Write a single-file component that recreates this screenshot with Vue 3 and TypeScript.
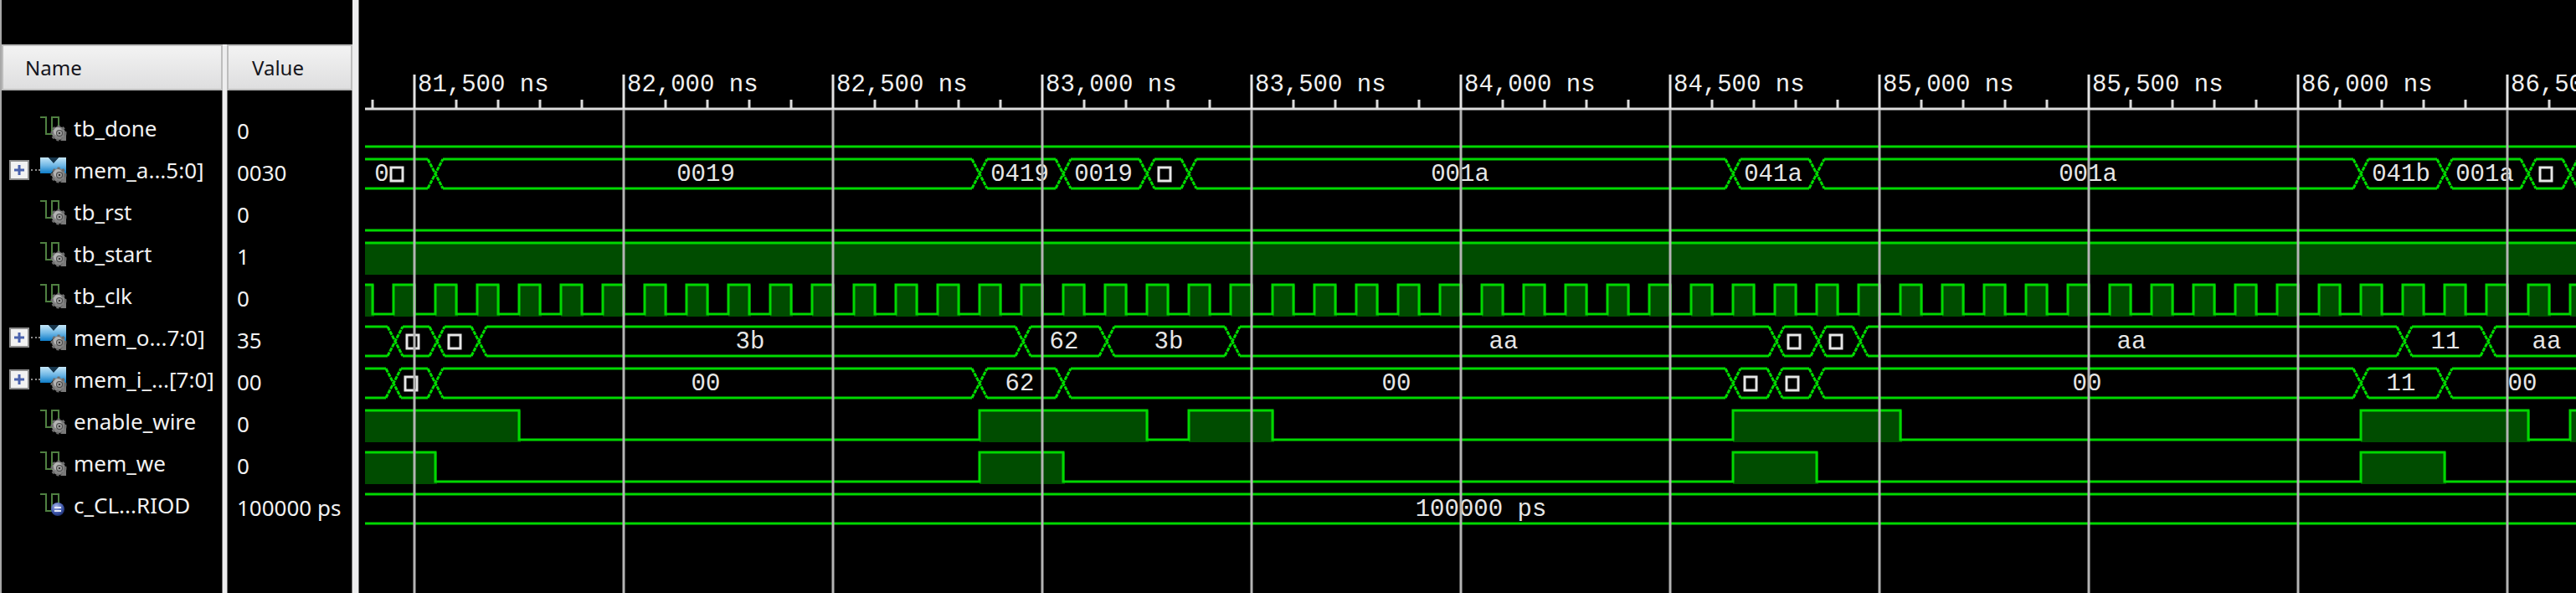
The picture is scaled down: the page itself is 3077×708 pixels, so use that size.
<script setup lang="ts">
import { computed, onBeforeUnmount, onMounted, ref } from 'vue'

type Kind = 'wire' | 'bus' | 'constant'

interface Signal {
  name: string
  value: string
  kind: Kind
}

interface Label {
  at: number
  text: string
}

interface BusLane {
  row: number
  edges: number[]
  labels: Label[]
  boxes: number[]
}

interface LogicLane {
  row: number
  pulses: [number, number][]
}

const signals: Signal[] = [
  { name: 'tb_done', value: '0', kind: 'wire' },
  { name: 'mem_a...5:0]', value: '0030', kind: 'bus' },
  { name: 'tb_rst', value: '0', kind: 'wire' },
  { name: 'tb_start', value: '1', kind: 'wire' },
  { name: 'tb_clk', value: '0', kind: 'wire' },
  { name: 'mem_o...7:0]', value: '35', kind: 'bus' },
  { name: 'mem_i_...[7:0]', value: '00', kind: 'bus' },
  { name: 'enable_wire', value: '0', kind: 'wire' },
  { name: 'mem_we', value: '0', kind: 'wire' },
  { name: 'c_CL...RIOD', value: '100000 ps', kind: 'constant' },
]

// Times are in nanoseconds; the trace is drawn at 2 ns per pixel.
const START = 81382
const BEFORE = 81000
const toX = (t: number): number => (t - START) / 2

const high = (row: number): number => 140 + row * 50
const low = (row: number): number => 175 + row * 50

const canvas = ref<SVGSVGElement | null>(null)
const width = ref(2641)
let observer: ResizeObserver | undefined

onMounted(() => {
  observer = new ResizeObserver(() => {
    if (canvas.value) width.value = canvas.value.getBoundingClientRect().width
  })
  if (canvas.value) observer.observe(canvas.value)
})
onBeforeUnmount(() => observer?.disconnect())

const end = computed(() => START + width.value * 2 + 200)

const ticks = computed(() => {
  const list: { x: number; major: boolean; label: string }[] = []
  for (let t = 81400; t < end.value; t += 100) {
    list.push({ x: toX(t), major: t % 500 === 0, label: `${t.toLocaleString('en-US')} ns` })
  }
  return list
})
const majors = computed(() => ticks.value.filter((t) => t.major))

const clock = computed<LogicLane>(() => {
  const pulses: [number, number][] = []
  for (let t = 81350; t < end.value; t += 100) pulses.push([t, t + 50])
  return { row: 4, pulses }
})

const logic = computed<LogicLane[]>(() => [
  { row: 0, pulses: [] },
  { row: 2, pulses: [] },
  { row: 3, pulses: [[BEFORE, end.value]] },
  clock.value,
  {
    row: 7,
    pulses: [
      [BEFORE, 81750],
      [82850, 83250],
      [83350, 83550],
      [84650, 85050],
      [86150, 86550],
      [86650, 87050],
    ],
  },
  {
    row: 8,
    pulses: [
      [BEFORE, 81550],
      [82850, 83050],
      [84650, 84850],
      [86150, 86350],
    ],
  },
])

const buses: BusLane[] = [
  {
    row: 1,
    edges: [81550, 82850, 83050, 83250, 83350, 84650, 84850, 86150, 86350, 86550, 86650],
    labels: [
      { at: 81422, text: '0' },
      { at: 82196, text: '0019' },
      { at: 82946, text: '0419' },
      { at: 83146, text: '0019' },
      { at: 83998, text: '001a' },
      { at: 84746, text: '041a' },
      { at: 85498, text: '001a' },
      { at: 86246, text: '041b' },
      { at: 86446, text: '001a' },
    ],
    boxes: [81458, 83292, 86592],
  },
  {
    row: 5,
    edges: [81454, 81554, 81654, 82954, 83154, 83454, 84754, 84854, 84954, 86254, 86454],
    labels: [
      { at: 82302, text: '3b' },
      { at: 83052, text: '62' },
      { at: 83302, text: '3b' },
      { at: 84102, text: 'aa' },
      { at: 85602, text: 'aa' },
      { at: 86352, text: '11' },
      { at: 86594, text: 'aa' },
    ],
    boxes: [81496, 81596, 84796, 84896],
  },
  {
    row: 6,
    edges: [81450, 81550, 82850, 83050, 84650, 84750, 84850, 86150, 86350],
    labels: [
      { at: 82196, text: '00' },
      { at: 82946, text: '62' },
      { at: 83846, text: '00' },
      { at: 85496, text: '00' },
      { at: 86246, text: '11' },
      { at: 86536, text: '00' },
    ],
    boxes: [81492, 84692, 84792],
  },
  { row: 9, edges: [], labels: [{ at: 84048, text: '100000 ps' }], boxes: [] },
]

function logicPath(lane: LogicLane): string {
  const h = high(lane.row)
  const l = low(lane.row)
  let d = `M${toX(BEFORE)} ${l}`
  for (const [from, to] of lane.pulses) d += `H${toX(from)}V${h}H${toX(to)}V${l}`
  return `${d}H${toX(end.value)}`
}

function railPath(lane: BusLane): string {
  const stops = [BEFORE, ...lane.edges, end.value]
  let d = ''
  for (let i = 0; i < stops.length - 1; i++) {
    const from = toX(stops[i]) + 9
    const to = toX(stops[i + 1]) - 9
    if (to > from) d += `M${from} ${high(lane.row)}H${to}M${from} ${low(lane.row)}H${to}`
  }
  return d
}

function crossPath(lane: BusLane): string {
  const h = high(lane.row)
  const l = low(lane.row)
  return lane.edges
    .map((t) => {
      const x = toX(t)
      return `M${x - 9} ${h}L${x + 9} ${l}M${x - 9} ${l}L${x + 9} ${h}`
    })
    .join('')
}
</script>

<template>
  <main class="viewer">
    <section class="signals">
      <table>
        <thead>
          <tr>
            <th class="name-col"><span>Name</span></th>
            <th class="value-col"><span>Value</span></th>
          </tr>
        </thead>
        <tbody>
          <tr class="spacer"><td class="name-col"></td><td class="value-col"></td></tr>
          <tr v-for="signal in signals" :key="signal.name" class="signal">
            <td class="name-col">
              <div class="name">
                <span class="branch">
                  <button v-if="signal.kind === 'bus'" type="button" :aria-label="`Expand ${signal.name}`">
                    <svg width="24" height="24" viewBox="0 0 24 24">
                      <rect x="1" y="1" width="22" height="22" fill="#f2f2f2" stroke="#8e8e8e" stroke-width="2" />
                      <path d="M6 12H18M12 6V18" stroke="#4a62ad" stroke-width="3" />
                    </svg>
                  </button>
                  <i v-if="signal.kind === 'bus'" class="dots"></i>
                </span>
                <svg class="icon" width="32" height="32" viewBox="0 0 32 32">
                  <defs>
                    <linearGradient id="busBlue" x1="0" y1="0" x2="0" y2="1">
                      <stop offset="0" stop-color="#c4e6f8" />
                      <stop offset="0.5" stop-color="#72b9e6" />
                      <stop offset="1" stop-color="#0d7cc8" />
                    </linearGradient>
                    <radialGradient id="ball" cx="0.4" cy="0.3" r="0.8">
                      <stop offset="0" stop-color="#a9b8ea" />
                      <stop offset="0.6" stop-color="#3c54a8" />
                      <stop offset="1" stop-color="#14235c" />
                    </radialGradient>
                  </defs>
                  <template v-if="signal.kind === 'bus'">
                    <path d="M0 1H10L16 7L22 1H31V20H20L16 16L13 20H0Z" fill="url(#busBlue)" />
                    <path d="M10 1L16 8L22 1Z" fill="#17364c" />
                  </template>
                  <path v-else d="M0 3H7V23H14V3H22V16" fill="none" stroke="#4f8041" stroke-width="2" />
                  <g v-if="signal.kind === 'constant'">
                    <circle cx="21" cy="21" r="8" fill="url(#ball)" />
                    <path d="M17 19H25M17 23H25" stroke="#e6ebfa" stroke-width="2" />
                  </g>
                  <g v-else>
                    <circle cx="22" cy="22" r="8" fill="#858585" />
                    <circle cx="22" cy="22" r="8" fill="none" stroke="#6e6e6e" stroke-width="3" stroke-dasharray="3 3" />
                    <path d="M24 31H31V23Z" fill="#7a7a7a" />
                    <circle cx="21" cy="20" r="5" fill="#b4b4b4" />
                    <circle cx="23" cy="22" r="4" fill="#4a4a4a" />
                    <circle cx="23" cy="22" r="3" fill="#9a9a9a" />
                    <circle cx="23" cy="22" r="1" fill="#111" />
                  </g>
                </svg>
                <span class="text">{{ signal.name }}</span>
              </div>
            </td>
            <td class="value-col"><div class="value">{{ signal.value }}</div></td>
          </tr>
          <tr class="rest"><td class="name-col"></td><td class="value-col"></td></tr>
        </tbody>
      </table>
    </section>

    <div class="splitter"></div>

    <section class="waves">
      <svg ref="canvas" class="canvas">
        <g class="ruler">
          <line x1="0" y1="130" x2="100%" y2="130" />
          <template v-for="tick in ticks" :key="tick.x">
            <line v-if="!tick.major" :x1="tick.x" y1="119" :x2="tick.x" y2="130" />
            <text v-else :x="tick.x + 4" y="109">{{ tick.label }}</text>
          </template>
        </g>

        <g v-for="lane in logic" :key="lane.row">
          <rect
            v-for="pulse in lane.pulses"
            :key="pulse[0]"
            class="fill"
            :x="toX(pulse[0])"
            :y="high(lane.row)"
            :width="toX(pulse[1]) - toX(pulse[0]) + 2"
            height="38"
          />
          <path class="trace" :d="logicPath(lane)" />
        </g>

        <g v-for="bus in buses" :key="bus.row">
          <path class="trace" :d="railPath(bus)" />
          <path class="cross" :d="crossPath(bus)" />
          <text
            v-for="label in bus.labels"
            :key="label.at"
            class="bus-value"
            :x="toX(label.at)"
            :y="high(bus.row) + 26"
          >{{ label.text }}</text>
          <rect
            v-for="box in bus.boxes"
            :key="box"
            class="box"
            :x="toX(box) - 7"
            :y="high(bus.row) + 10"
            width="14"
            height="16"
          />
        </g>

        <g v-for="tick in majors" :key="tick.x">
          <line class="grid" :x1="tick.x" y1="130" :x2="tick.x" y2="100%" />
          <line class="mark" :x1="tick.x" y1="89" :x2="tick.x" y2="131" />
        </g>
      </svg>
    </section>
  </main>
</template>

<style>
body {
  margin: 0;
  background: #000;
}
</style>

<style scoped>
.viewer {
  display: flex;
  min-height: 100vh;
  background: #000;
  color: #f2f2f2;
  font-family: "Noto Sans", "Open Sans", sans-serif;
  font-size: 26px;
}

.signals {
  display: flex;
  flex: none;
  box-sizing: border-box;
  width: 421px;
  padding-top: 53px;
  border-left: 2px solid #a8a8a8;
}

table {
  width: 100%;
  table-layout: fixed;
  border-collapse: separate;
  border-spacing: 0;
}

th,
td {
  padding: 0;
  font-weight: 400;
  text-align: left;
}

.name-col {
  box-sizing: border-box;
  width: 269px;
  border-right: 5px solid #ededee;
}

th {
  height: 55px;
  color: #15151c;
  font-size: 24px;
  background: #f4f4f4;
}

th span {
  display: block;
  box-sizing: border-box;
  height: 55px;
  padding-left: 26px;
  border: 2px solid #bdbdbd;
  background: linear-gradient(#f3f3f3, #dededf);
  line-height: 51px;
}

th.value-col span {
  padding-left: 28px;
}

td.name-col {
  box-shadow: inset -1px 0 #777;
}

td.value-col {
  box-shadow: inset 1px 0 #777, inset -1px 0 #777;
}

.spacer td {
  height: 20px;
}

.signal td {
  height: 50px;
}

.name {
  display: flex;
  align-items: center;
  height: 50px;
  padding-left: 9px;
  white-space: nowrap;
}

.branch {
  display: flex;
  align-items: center;
  width: 37px;
  gap: 2px;
}

button {
  display: block;
  width: 24px;
  height: 24px;
  padding: 0;
  border: 0;
  background: none;
}

button svg,
.icon {
  display: block;
}

.dots {
  flex: 1;
  border-top: 2px dotted #8c8c8c;
}

.icon {
  flex: none;
  margin-right: 8px;
}

.value {
  height: 50px;
  padding: 3px 0 0 12px;
  box-sizing: border-box;
  line-height: 50px;
  white-space: nowrap;
}

.splitter {
  flex: none;
  width: 7px;
  background: #ededee;
  border-right: 1px solid #777;
  cursor: col-resize;
}

.waves {
  display: flex;
  flex: 1;
  min-width: 0;
  min-height: 650px;
  padding-left: 7px;
}

.canvas {
  display: block;
  flex: 1;
  min-width: 0;
  overflow: hidden;
}

text {
  fill: #f0f0f0;
  font-family: "Liberation Mono", monospace;
  font-size: 29px;
}

.bus-value {
  fill: #e6e6e6;
  text-anchor: middle;
}

.ruler line {
  stroke: #dcdcdc;
  stroke-width: 3;
}

.mark {
  stroke: #e4e4e4;
  stroke-width: 3;
}

.grid {
  stroke: #b4b4b4;
  stroke-width: 3;
}

.trace {
  fill: none;
  stroke: #00d800;
  stroke-width: 3;
}

.cross {
  fill: none;
  stroke: #00dc00;
  stroke-width: 3;
  stroke-dasharray: 5 1;
}

.fill {
  fill: #004c00;
}

.box {
  fill: none;
  stroke: #e6e6e6;
  stroke-width: 3;
}
</style>
